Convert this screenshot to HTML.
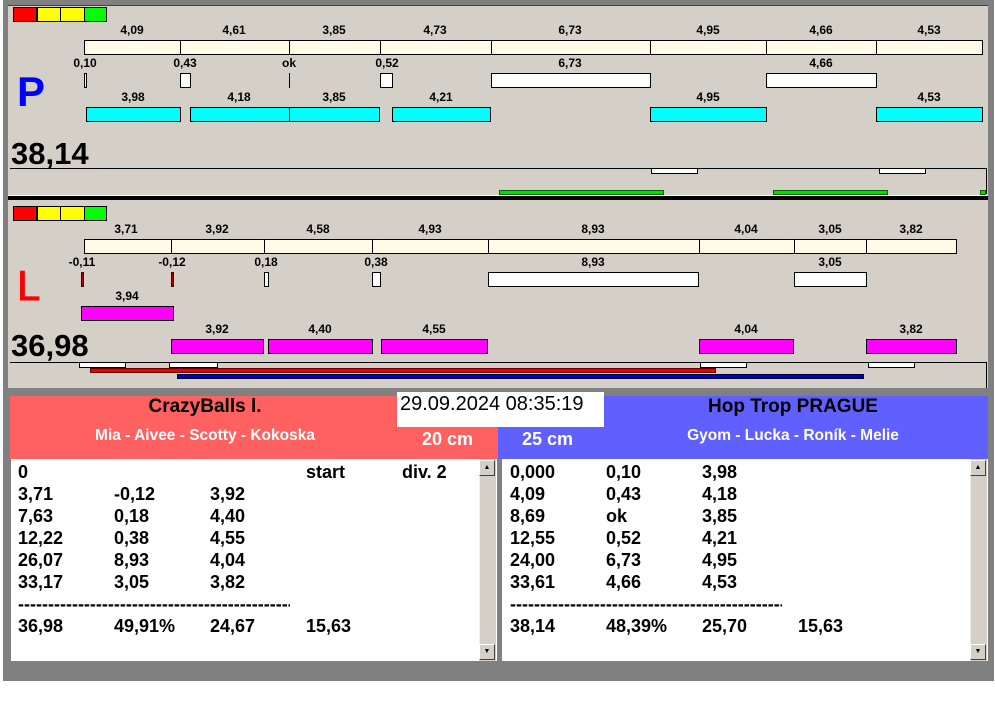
<!DOCTYPE html>
<html><head><meta charset="utf-8"><style>
*{margin:0;padding:0;box-sizing:border-box}
body{width:995px;height:716px;background:#fff;position:relative;overflow:hidden;font-family:"Liberation Sans",Arial,sans-serif}
div{position:absolute}
.t{font-weight:bold;font-size:12px;color:#000;width:80px;text-align:center;line-height:14px}
.c{background:#fffbe4;border:1px solid #000}
.w{background:#fff;border:1px solid #000}
.cy{background:#00ffff;border:1px solid #000}
.m{background:#ff00ff;border:1px solid #000}
.r{font-weight:bold;font-size:18px;line-height:22px;color:#000;white-space:pre}
.sb{background:#d4d0c8;border-left:1px solid #eee}
.btn{width:16px;height:16px;background:#d4d0c8;border:1px solid;border-color:#fff #404040 #404040 #fff;font-size:7px;text-align:center;line-height:14px}
</style></head><body>
<div style="left:3px;top:0;width:991px;height:681px;background:#808080"></div>
<div style="left:8px;top:5px;width:980px;height:383px;background:#d4d0c8;border-top:1px solid #404040"></div>
<div style="left:8px;top:195px;width:980px;height:1px;background:#fff"></div>
<div style="left:8px;top:196px;width:980px;height:4px;background:#000"></div>

<div style="left:13px;top:7px;width:24px;height:15px;background:#f00;border:1px solid #000"></div>
<div style="left:37px;top:7px;width:24px;height:15px;background:#ff0;border:1px solid #000"></div>
<div style="left:60px;top:7px;width:25px;height:15px;background:#ff0;border:1px solid #000"></div>
<div style="left:84px;top:7px;width:23px;height:15px;background:#0f0;border:1px solid #000"></div>
<div class="c" style="left:84px;top:40px;width:97px;height:15px"></div>
<div class="c" style="left:180px;top:40px;width:110px;height:15px"></div>
<div class="c" style="left:289px;top:40px;width:92px;height:15px"></div>
<div class="c" style="left:380px;top:40px;width:112px;height:15px"></div>
<div class="c" style="left:491px;top:40px;width:160px;height:15px"></div>
<div class="c" style="left:650px;top:40px;width:117px;height:15px"></div>
<div class="c" style="left:766px;top:40px;width:111px;height:15px"></div>
<div class="c" style="left:876px;top:40px;width:107px;height:15px"></div>
<div class="t" style="left:92px;top:23px">4,09</div><div class="t" style="left:194px;top:23px">4,61</div><div class="t" style="left:294px;top:23px">3,85</div><div class="t" style="left:395px;top:23px">4,73</div><div class="t" style="left:530px;top:23px">6,73</div><div class="t" style="left:668px;top:23px">4,95</div><div class="t" style="left:781px;top:23px">4,66</div><div class="t" style="left:889px;top:23px">4,53</div>
<div class="t" style="left:45px;top:56px">0,10</div><div class="t" style="left:145px;top:56px">0,43</div><div class="t" style="left:249px;top:56px">ok</div><div class="t" style="left:347px;top:56px">0,52</div><div class="t" style="left:530px;top:56px">6,73</div><div class="t" style="left:781px;top:56px">4,66</div>
<div class="w" style="left:84px;top:73px;width:3px;height:15px"></div>
<div class="w" style="left:180px;top:73px;width:11px;height:15px"></div>
<div style="left:289px;top:73px;width:1px;height:15px;background:#000"></div>
<div class="w" style="left:380px;top:73px;width:13px;height:15px"></div>
<div class="w" style="left:491px;top:73px;width:160px;height:15px"></div>
<div class="w" style="left:766px;top:73px;width:111px;height:15px"></div>
<div style="left:17px;top:68px;font:bold 42px 'Liberation Sans',sans-serif;color:#0000ff">P</div>
<div class="t" style="left:93px;top:90px">3,98</div><div class="t" style="left:199px;top:90px">4,18</div><div class="t" style="left:294px;top:90px">3,85</div><div class="t" style="left:401px;top:90px">4,21</div><div class="t" style="left:668px;top:90px">4,95</div><div class="t" style="left:889px;top:90px">4,53</div>
<div class="cy" style="left:86px;top:107px;width:95px;height:15px"></div>
<div class="cy" style="left:190px;top:107px;width:100px;height:15px"></div>
<div class="cy" style="left:289px;top:107px;width:91px;height:15px"></div>
<div class="cy" style="left:392px;top:107px;width:99px;height:15px"></div>
<div class="cy" style="left:650px;top:107px;width:117px;height:15px"></div>
<div class="cy" style="left:876px;top:107px;width:107px;height:15px"></div>
<div style="left:11px;top:136px;font:bold 31px 'Liberation Sans',sans-serif;color:#000">38,14</div>
<div style="left:10px;top:168px;width:977px;height:1px;background:#000"></div>
<div style="left:986px;top:168px;width:1px;height:26px;background:#000"></div>
<div class="w" style="left:651px;top:168px;width:47px;height:6px"></div>
<div class="w" style="left:879px;top:168px;width:47px;height:6px"></div>
<div style="left:499px;top:190px;width:165px;height:5px;background:#00e000;border:1px solid #060"></div>
<div style="left:773px;top:190px;width:115px;height:5px;background:#00e000;border:1px solid #060"></div>
<div style="left:980px;top:190px;width:6px;height:5px;background:#00e000;border:1px solid #060"></div>

<div style="left:13px;top:206px;width:24px;height:15px;background:#f00;border:1px solid #000"></div>
<div style="left:37px;top:206px;width:24px;height:15px;background:#ff0;border:1px solid #000"></div>
<div style="left:60px;top:206px;width:25px;height:15px;background:#ff0;border:1px solid #000"></div>
<div style="left:84px;top:206px;width:23px;height:15px;background:#0f0;border:1px solid #000"></div>
<div class="c" style="left:84px;top:239px;width:88px;height:15px"></div>
<div class="c" style="left:171px;top:239px;width:94px;height:15px"></div>
<div class="c" style="left:264px;top:239px;width:109px;height:15px"></div>
<div class="c" style="left:372px;top:239px;width:117px;height:15px"></div>
<div class="c" style="left:488px;top:239px;width:212px;height:15px"></div>
<div class="c" style="left:699px;top:239px;width:96px;height:15px"></div>
<div class="c" style="left:794px;top:239px;width:73px;height:15px"></div>
<div class="c" style="left:866px;top:239px;width:91px;height:15px"></div>
<div class="t" style="left:86px;top:222px">3,71</div><div class="t" style="left:177px;top:222px">3,92</div><div class="t" style="left:278px;top:222px">4,58</div><div class="t" style="left:390px;top:222px">4,93</div><div class="t" style="left:553px;top:222px">8,93</div><div class="t" style="left:706px;top:222px">4,04</div><div class="t" style="left:790px;top:222px">3,05</div><div class="t" style="left:871px;top:222px">3,82</div>
<div class="t" style="left:42px;top:255px">-0,11</div><div class="t" style="left:132px;top:255px">-0,12</div><div class="t" style="left:226px;top:255px">0,18</div><div class="t" style="left:336px;top:255px">0,38</div><div class="t" style="left:553px;top:255px">8,93</div><div class="t" style="left:790px;top:255px">3,05</div>
<div style="left:81px;top:272px;width:3px;height:15px;background:#a00;border:1px solid #400"></div>
<div style="left:171px;top:272px;width:3px;height:15px;background:#a00;border:1px solid #400"></div>
<div class="w" style="left:264px;top:272px;width:5px;height:15px"></div>
<div class="w" style="left:372px;top:272px;width:9px;height:15px"></div>
<div class="w" style="left:488px;top:272px;width:211px;height:15px"></div>
<div class="w" style="left:794px;top:272px;width:73px;height:15px"></div>
<div style="left:17px;top:262px;font:42px 'Liberation Sans',sans-serif;color:#ff0000;-webkit-text-stroke:1px #ff0000">L</div>
<div class="t" style="left:87px;top:289px">3,94</div>
<div class="m" style="left:81px;top:306px;width:93px;height:15px"></div>
<div class="t" style="left:177px;top:322px">3,92</div><div class="t" style="left:280px;top:322px">4,40</div><div class="t" style="left:394px;top:322px">4,55</div><div class="t" style="left:706px;top:322px">4,04</div><div class="t" style="left:871px;top:322px">3,82</div>
<div class="m" style="left:171px;top:339px;width:93px;height:15px"></div>
<div class="m" style="left:268px;top:339px;width:105px;height:15px"></div>
<div class="m" style="left:381px;top:339px;width:107px;height:15px"></div>
<div class="m" style="left:699px;top:339px;width:95px;height:15px"></div>
<div class="m" style="left:866px;top:339px;width:91px;height:15px"></div>
<div style="left:11px;top:328px;font:bold 31px 'Liberation Sans',sans-serif;color:#000">36,98</div>
<div style="left:10px;top:362px;width:977px;height:1px;background:#000"></div>
<div style="left:986px;top:362px;width:1px;height:26px;background:#000"></div>
<div class="w" style="left:79px;top:362px;width:47px;height:6px"></div>
<div class="w" style="left:169px;top:362px;width:49px;height:6px"></div>
<div class="w" style="left:700px;top:362px;width:47px;height:6px"></div>
<div class="w" style="left:868px;top:362px;width:47px;height:6px"></div>
<div style="left:90px;top:368px;width:626px;height:5px;background:#e00;border:1px solid #600"></div>
<div style="left:177px;top:374px;width:687px;height:5px;background:#0000cc;border:1px solid #003"></div>

<div style="left:10px;top:396px;width:488px;height:63px;background:#ff6060"></div>
<div style="left:498px;top:396px;width:490px;height:63px;background:#6060ff"></div>
<div style="left:397px;top:392px;width:207px;height:35px;background:#fff"></div>
<div style="left:400px;top:393px;font-size:20px;color:#000;white-space:nowrap">29.09.2024 08:35:19</div>
<div style="left:10px;top:396px;width:390px;text-align:center;font-weight:bold;font-size:19px;color:#000">CrazyBalls l.</div>
<div style="left:10px;top:427px;width:390px;text-align:center;font-weight:bold;font-size:15.5px;color:#fff">Mia - Aivee - Scotty - Kokoska</div>
<div style="left:422px;top:429px;font-weight:bold;font-size:18px;color:#fff">20 cm</div>
<div style="left:522px;top:429px;font-weight:bold;font-size:18px;color:#fff">25 cm</div>
<div style="left:604px;top:396px;width:378px;text-align:center;font-weight:bold;font-size:19px;color:#000">Hop Trop PRAGUE</div>
<div style="left:604px;top:427px;width:378px;text-align:center;font-weight:bold;font-size:15.5px;color:#fff">Gyom - Lucka - Roník - Melie</div>

<div style="left:11px;top:459px;width:486px;height:202px;background:#fff"></div>
<div style="left:502px;top:459px;width:486px;height:202px;background:#fff"></div>
<div class="sb" style="left:479px;top:459px;width:17px;height:202px"></div>
<div class="btn" style="left:479px;top:460px">▲</div><div class="btn" style="left:479px;top:644px">▼</div>
<div class="sb" style="left:970px;top:459px;width:17px;height:202px"></div>
<div class="btn" style="left:970px;top:460px">▲</div><div class="btn" style="left:970px;top:644px">▼</div>

<div class="r" style="left:18px;top:461px">0</div><div class="r" style="left:306px;top:461px">start</div><div class="r" style="left:402px;top:461px">div. 2</div>
<div class="r" style="left:18px;top:483px">3,71
7,63
12,22
26,07
33,17</div>
<div class="r" style="left:114px;top:483px">-0,12
0,18
0,38
8,93
3,05</div>
<div class="r" style="left:210px;top:483px">3,92
4,40
4,55
4,04
3,82</div>
<div class="r" style="left:18px;top:593px;overflow:hidden;width:272px">------------------------------------------------</div>
<div class="r" style="left:18px;top:615px">36,98</div><div class="r" style="left:114px;top:615px">49,91%</div><div class="r" style="left:210px;top:615px">24,67</div><div class="r" style="left:306px;top:615px">15,63</div>

<div class="r" style="left:510px;top:461px">0,000
4,09
8,69
12,55
24,00
33,61</div>
<div class="r" style="left:606px;top:461px">0,10
0,43
ok
0,52
6,73
4,66</div>
<div class="r" style="left:702px;top:461px">3,98
4,18
3,85
4,21
4,95
4,53</div>
<div class="r" style="left:510px;top:593px;overflow:hidden;width:272px">------------------------------------------------</div>
<div class="r" style="left:510px;top:615px">38,14</div><div class="r" style="left:606px;top:615px">48,39%</div><div class="r" style="left:702px;top:615px">25,70</div><div class="r" style="left:798px;top:615px">15,63</div>
</body></html>
